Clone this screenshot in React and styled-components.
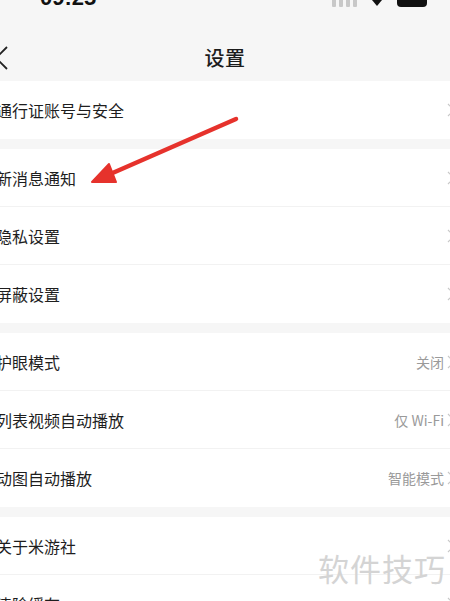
import React from "react";
import styled, { createGlobalStyle } from "styled-components";

const GlobalStyle = createGlobalStyle`
  html, body {
    margin: 0;
    padding: 0;
    background: #f6f6f6;
    overflow: hidden;
  }
  body {
    font-family: "Noto Sans CJK SC", "Noto Sans", sans-serif;
  }
`;

const groups = [
  [{ label: "通行证账号与安全" }],
  [{ label: "新消息通知" }, { label: "隐私设置" }, { label: "屏蔽设置" }],
  [
    { label: "护眼模式", value: "关闭" },
    { label: "列表视频自动播放", value: "仅 Wi-Fi" },
    { label: "动图自动播放", value: "智能模式" },
  ],
  [{ label: "关于米游社" }, { label: "清除缓存" }],
];

function Chevron() {
  return (
    <ChevronIcon viewBox="0 0 8 14" width="8" height="14">
      <path d="M1 1 L7 7 L1 13" fill="none" stroke="#c8c8c8" strokeWidth="1.2" />
    </ChevronIcon>
  );
}

function App() {
  return (
    <>
      <GlobalStyle />
      <Page>
        <StatusBar>
          <Time>09:25</Time>
          <StatusIcons>
            <Signal>
              {[0, 1, 2, 3].map((i) => (
                <SignalBar key={i} />
              ))}
            </Signal>
            <svg width="12" height="10" viewBox="0 0 12 10">
              <path d="M6 9 L1 3 Q6 -1 11 3 Z" fill="#111" />
            </svg>
            <Battery />
          </StatusIcons>
        </StatusBar>

        <Header>
          <BackIcon viewBox="0 0 16 24" width="16" height="24">
            <path d="M13 1 L2 12 L13 23" fill="none" stroke="#222" strokeWidth="1.8" />
          </BackIcon>
          <Title>设置</Title>
        </Header>

        {groups.map((rows, gi) => (
          <Group key={gi}>
            {rows.map((row, ri) => (
              <Row key={ri} $last={ri === rows.length - 1}>
                <Label>{row.label}</Label>
                <Right>
                  {row.value && <Value>{row.value}</Value>}
                  <Chevron />
                </Right>
              </Row>
            ))}
          </Group>
        ))}

        <Arrow viewBox="0 0 450 601" width="450" height="601">
          <line x1="236" y1="119" x2="108" y2="175" stroke="#e6322c" strokeWidth="4.5" strokeLinecap="round" />
          <polygon points="92,182 109,164 116,182" fill="#e6322c" stroke="#e6322c" strokeWidth="2" strokeLinejoin="round" />
        </Arrow>

        <Watermark>软件技巧</Watermark>
      </Page>
    </>
  );
}

const Page = styled.div`
  position: relative;
  width: 450px;
  height: 601px;
  overflow: hidden;
  background: #f6f6f6;
`;

const StatusBar = styled.div`
  height: 33px;
  display: flex;
  align-items: flex-start;
  justify-content: space-between;
  padding: 0 23px 0 40px;
`;

const Time = styled.div`
  margin-top: -13px;
  font-family: "Liberation Sans", sans-serif;
  font-weight: 700;
  font-size: 22px;
  line-height: 1;
  color: #111;
`;

const StatusIcons = styled.div`
  display: flex;
  align-items: flex-end;
  gap: 14px;
  margin-top: -5px;
`;

const Signal = styled.div`
  display: flex;
  gap: 3px;
  align-items: flex-end;
`;

const SignalBar = styled.span`
  width: 4px;
  height: 10px;
  border-radius: 1px;
  background: #c8c8c8;
`;

const Battery = styled.span`
  width: 30px;
  height: 12px;
  border-radius: 4px;
  background: #111;
`;

const Header = styled.div`
  height: 48px;
  display: flex;
  align-items: center;
  justify-content: center;
  position: relative;
`;

const BackIcon = styled.svg`
  position: absolute;
  left: -6px;
  top: 13px;
`;

const Title = styled.div`
  font-size: 20px;
  font-weight: 500;
  color: #1c1c1c;
  letter-spacing: 0.5px;
`;

const Group = styled.div`
  background: #fff;
  margin-bottom: 10px;
`;

const Row = styled.div`
  height: 58px;
  box-sizing: border-box;
  display: flex;
  align-items: center;
  justify-content: space-between;
  border-bottom: ${(p) => (p.$last ? "none" : "1px solid #f2f2f2")};
`;

const Label = styled.div`
  margin-left: -4px;
  font-size: 16px;
  color: #1e1e1e;
`;

const Right = styled.div`
  display: flex;
  align-items: center;
  gap: 3px;
  margin-right: -5px;
`;

const Value = styled.span`
  font-size: 14px;
  color: #9a9a9a;
`;

const ChevronIcon = styled.svg`
  display: block;
`;

const Arrow = styled.svg`
  position: absolute;
  left: 0;
  top: 0;
  pointer-events: none;
`;

const Watermark = styled.div`
  position: absolute;
  right: 4px;
  top: 545px;
  font-size: 31px;
  letter-spacing: 1px;
  color: #d4d4d4;
`;

export default App;
